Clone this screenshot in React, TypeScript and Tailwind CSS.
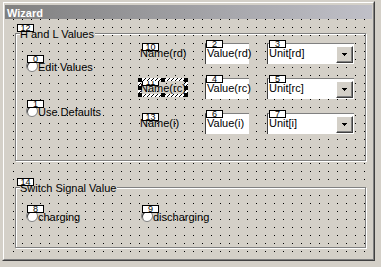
import type { ReactNode } from 'react';

// tab-order badge drawn over the top-left of each control
function Tab({ n, className }: { n: string; className: string }) {
  return (
    <div
      className={`absolute z-10 w-[17px] h-[8px] border border-black bg-white flex items-center justify-center text-[9px] leading-[6px] ${className}`}
    >
      {n}
    </div>
  );
}

function Radio({ n, label, className = '' }: { n: string; label: string; className?: string }) {
  return (
    <div className={`relative flex items-start ${className}`}>
      <div className="w-[12px] h-[12px] rounded-full bg-white border border-[#808080] shadow-[inset_1px_1px_0_#404040]" />
      <span className="mt-[1px] leading-[13px] whitespace-nowrap">{label}</span>
      <Tab n={n} className="left-[1px] top-[-5px] w-[16px]" />
    </div>
  );
}

function GroupBox({
  caption,
  n,
  className,
  children,
}: {
  caption: string;
  n: string;
  className: string;
  children: ReactNode;
}) {
  return (
    <div
      className={`relative w-[351px] border border-[#808080] shadow-[1px_1px_0_#fff,inset_1px_1px_0_#fff] ${className}`}
    >
      <span className="absolute left-[4px] top-[-6px] bg-[#d4d0c8] pr-[1px] leading-[13px] whitespace-nowrap">
        {caption}
      </span>
      <Tab n={n} className="left-[1px] top-[-10px]" />
      {children}
    </div>
  );
}

function Edit({ n, text }: { n: string; text: string }) {
  return (
    <div className="relative w-[44px] h-[21px] bg-white border-l border-t border-l-[#404040] border-t-[#808080] pl-[1px] pt-[3px] leading-[13px]">
      {text}
      <Tab n={n} className="left-0 top-[-4px]" />
    </div>
  );
}

function Combo({ n, text }: { n: string; text: string }) {
  return (
    <div className="relative ml-[18px] w-[87px] h-[21px] bg-white border-l border-t border-l-[#404040] border-t-[#808080] flex items-start">
      <span className="flex-1 pl-[1px] pt-[3px] leading-[13px]">{text}</span>
      <div className="mt-[2px] mr-[1px] w-[17px] h-[17px] bg-[#d4d0c8] border border-t-white border-l-white border-r-[#404040] border-b-[#404040] shadow-[inset_-1px_-1px_0_#808080] flex items-center justify-center">
        <svg width="5" height="3" viewBox="0 0 5 3" shapeRendering="crispEdges">
          <path d="M0 0h5v1H0zM1 1h3v1H1zM2 2h1v1H2z" fill="#000" />
        </svg>
      </div>
      <Tab n={n} className="left-[1px] top-[-4px]" />
    </div>
  );
}

function StaticText({ n, text, selected }: { n: string; text: string; selected?: boolean }) {
  return (
    <div className="relative pt-[4px] leading-[13px] whitespace-nowrap">
      {text}
      <Tab n={n} className="left-[2px] top-0" />
      {selected && (
        <svg
          className="absolute z-20 left-[-2px] top-0"
          width="50"
          height="19"
          viewBox="0 0 50 19"
          shapeRendering="crispEdges"
        >
          <defs>
            <pattern id="hatch" width="4" height="4" patternUnits="userSpaceOnUse">
              <rect width="4" height="4" fill="#fff" />
              <path d="M3 0h1v1H3zM2 1h1v1H2zM1 2h1v1H1zM0 3h1v1H0z" fill="#000" />
            </pattern>
          </defs>
          <path d="M0 0H50V19H0ZM3 3V16H47V3Z" fill="url(#hatch)" fillRule="evenodd" />
          <rect x="0" y="0" width="4" height="4" fill="#000" />
          <rect x="23" y="0" width="4" height="4" fill="#000" />
          <rect x="46" y="0" width="4" height="4" fill="#000" />
          <rect x="0" y="8" width="4" height="4" fill="#000" />
          <rect x="46" y="8" width="4" height="4" fill="#000" />
          <rect x="0" y="15" width="4" height="4" fill="#000" />
          <rect x="23" y="15" width="4" height="4" fill="#000" />
          <rect x="46" y="15" width="4" height="4" fill="#000" />
        </svg>
      )}
    </div>
  );
}

const rows = [
  { name: 'Name(rd)', nameTab: '10', value: 'Value(rd)', valueTab: '2', unit: 'Unit[rd]', unitTab: '3' },
  { name: 'Name(rc)', nameTab: '11', value: 'Value(rc)', valueTab: '4', unit: 'Unit[rc]', unitTab: '5', selected: true },
  { name: 'Name(i)', nameTab: '13', value: 'Value(i)', valueTab: '6', unit: 'Unit[i]', unitTab: '7' },
];

export default function App() {
  return (
    <div className="w-[381px] h-[267px] bg-[#d4d0c8] pl-[2px] pt-[1px] overflow-hidden text-[11px] text-black font-['Liberation_Sans',Arial,sans-serif]">
      <div className="w-[373px] h-[260px] border border-t-[#d4d0c8] border-l-[#d4d0c8] border-r-[#404040] border-b-[#404040]">
        <div className="h-full flex flex-col border border-t-white border-l-white border-r-[#808080] border-b-[#808080] px-[1px] pt-[2px] pb-[1px]">
          {/* Title bar */}
          <div className="h-[14px] shrink-0 pl-[2px] pt-[2px] bg-[linear-gradient(to_right,#808080,#c0c0c8)]">
            <span className="block text-white font-bold leading-[13px]">Wizard</span>
          </div>

          {/* Dialog canvas with the editor grid */}
          <div className="flex-1 pl-[10px] pt-[14px] bg-[image:conic-gradient(from_270deg_at_1px_1px,#000_90deg,transparent_0)] bg-[size:9px_8px] bg-[position:8px_0px]">
            <GroupBox caption="H and L Values" n="12" className="h-[128px] flex pl-[10px] pt-[9px]">
              <div className="w-[114px] shrink-0 pt-[17px] flex flex-col gap-[31px]">
                <Radio n="0" label="Edit Values" />
                <Radio n="1" label="Use Defaults" />
              </div>
              <div className="shrink-0 grid grid-cols-[65px_44px_105px] gap-y-[14px] auto-rows-[21px]">
                {rows.map((r) => (
                  <div key={r.name} className="contents">
                    <StaticText n={r.nameTab} text={r.name} selected={r.selected} />
                    <Edit n={r.valueTab} text={r.value} />
                    <Combo n={r.unitTab} text={r.unit} />
                  </div>
                ))}
              </div>
            </GroupBox>

            <GroupBox caption="Switch Signal Value" n="14" className="mt-[26px] h-[61px] flex pl-[10px] pt-[22px]">
              <Radio n="8" label="charging" className="w-[115px]" />
              <Radio n="9" label="discharging" />
            </GroupBox>
          </div>
        </div>
      </div>
    </div>
  );
}
